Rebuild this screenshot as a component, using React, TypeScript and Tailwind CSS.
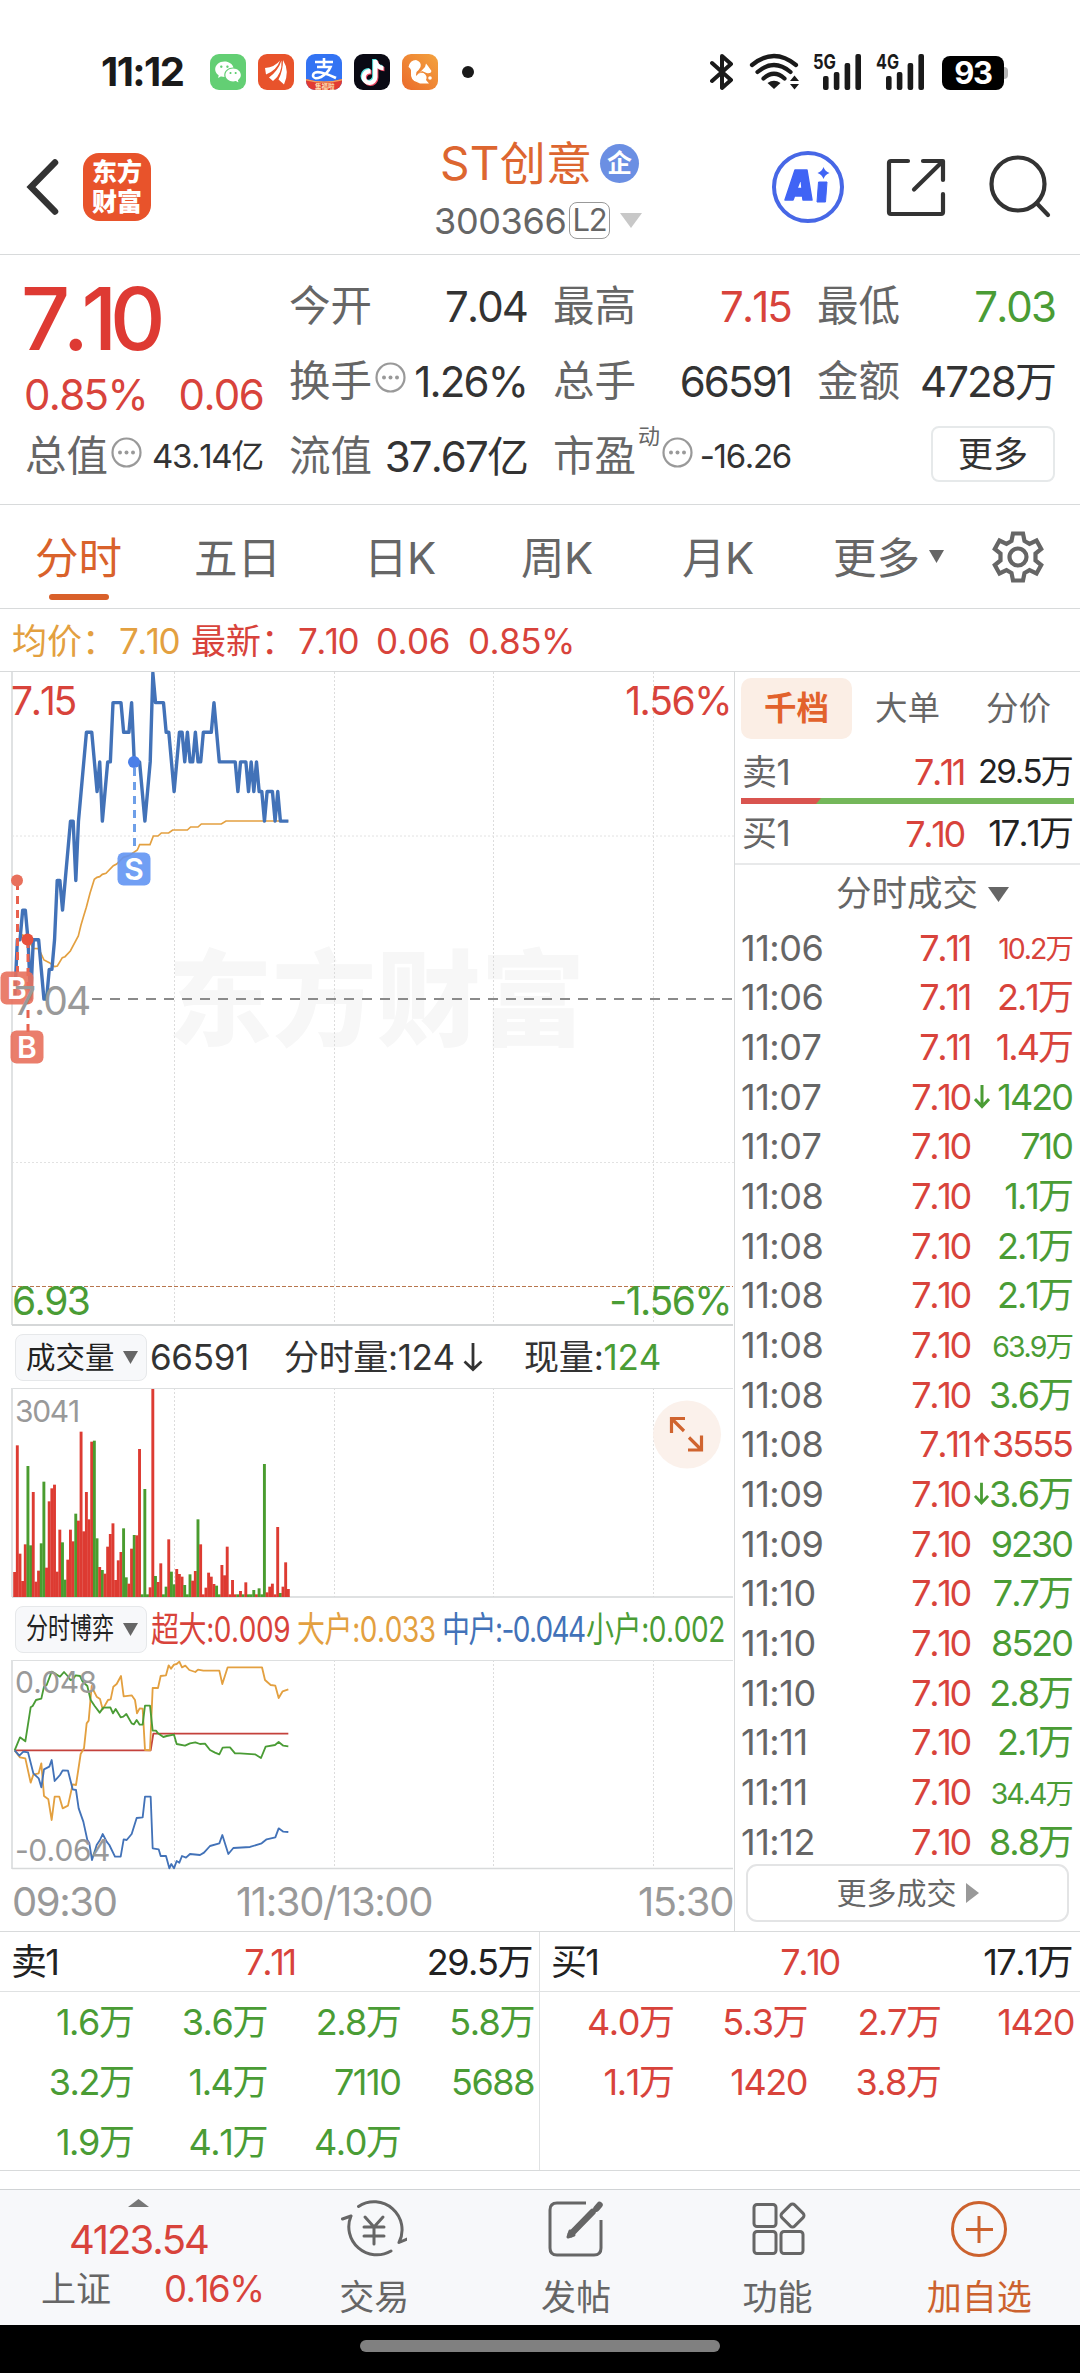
import type { ReactNode } from "react";
import clsx from "clsx";
import { FaTiktok } from "react-icons/fa6";
import { RiWechatFill } from "react-icons/ri";

const UP = "text-[#d8433b]";
const DOWN = "text-[#4a9c35]";

/* minute prices, in cents above 7.00 */
const PRICES = [
  4, 6, 6, 7, 7, 6, 4, 6, 6, 6, 5, 4, 4, 5, 5, 6, 8, 8, 7, 8, 9, 10, 10, 8, 10,
  11, 12, 13, 13, 13, 12, 11, 12, 10, 11, 12, 12, 14, 14, 14, 14, 13, 13, 13,
  14, 12, 12, 12, 11, 10, 11, 12, 15, 14, 14, 14, 14, 13, 13, 12, 11, 12, 13,
  13, 12, 13, 12, 12, 13, 12, 12, 13, 13, 13, 13, 14, 13, 12, 12, 12, 12, 12,
  12, 12, 11, 12, 12, 12, 11, 12, 11, 12, 11, 11, 10, 11, 11, 11, 10, 11, 10,
  10, 10, 10,
];

/* bar heights, negative for a falling minute */
const VOLUMES = [
  75, 455, 130, 48, 158, -393, -155, 315, 46, 79, -161, -346, 88, 287, 326, 337,
  76, 202, -164, -52, 112, 202, 167, -250, 229, 496, 197, 315, 233, 466, -469,
  -176, 90, -81, 70, 151, 189, 221, 51, 110, 135, -206, -59, 40, 145, -186, 185,
  444, -8, -324, -8, 29, 624, -63, 45, 101, -8, -31, 173, -76, -38, 84, 69, 61,
  -36, -8, -68, 49, 78, -233, 158, 8, 28, 73, 61, 39, -34, -8, 96, 65, 151, 8,
  51, 8, -8, 18, -8, 44, -8, -8, -21, 8, -26, -8, -399, 14, 31, 40, 8, 210, -12,
  31, 104, 24,
];

const minuteX = (i: number) => 14.7 + i * 2.657;

const AVERAGE =
  "44,1010 52,839 60,838 68,825 76,830 84,842 92,852 100,865 116,866 132,900 148,908 164,920 172,918 187,893 195,890 211,873 235,828 243,795 251,768 259,742 270,700 283,658 291,652 299,650 307,643 318,640 340,617 350,612 370,592 387,587 412,570 419,554 450,554 460,528 474,528 484,519 506,519 518,510 562,510 572,501 594,501 604,492 664,492 678,483 865,483";

const FLOWS = [
  {
    color: "#c4423c",
    points: "44,451 452,451 460,401 865,401",
  },
  {
    color: "#e3a040",
    points:
      "44,451 60,472 76,475 92,548 100,524 116,520 124,490 132,588 145,598 155,660 164,590 178,590 188,625 204,617 218,553 228,555 242,462 252,445 260,370 266,362 275,258 280,270 290,290 300,297 308,328 324,300 332,298 340,260 350,252 363,228 371,289 395,286 405,300 411,340 419,325 428,326 435,450 450,451 458,264 474,264 482,228 498,226 506,196 513,206 522,194 530,192 538,185 546,202 556,197 568,210 586,216 594,209 610,212 658,212 667,252 683,202 786,202 795,240 812,255 826,257 836,294 848,274 865,268",
  },
  {
    color: "#4a9c35",
    points:
      "44,451 60,412 76,424 92,322 98,318 108,300 124,296 132,260 140,255 155,215 164,220 172,225 180,230 192,216 203,228 211,240 219,238 227,226 240,228 248,245 262,258 272,300 284,318 299,338 310,323 331,322 339,340 347,327 362,352 370,350 379,342 395,370 402,373 410,360 419,374 428,374 435,317 450,317 458,392 468,392 474,400 490,411 500,408 522,404 530,432 555,437 570,430 586,427 600,432 615,431 630,450 645,458 658,463 668,443 680,442 690,442 705,460 720,460 765,463 783,474 797,440 825,435 836,426 850,437 865,439",
  },
  {
    color: "#4272b8",
    points:
      "44,451 58,467 70,455 84,457 100,520 116,535 124,562 132,508 148,500 155,480 164,543 180,525 188,511 204,512 218,568 228,570 236,625 250,665 262,720 268,730 276,780 290,735 300,720 308,702 320,725 328,735 345,770 362,770 371,718 380,720 395,702 410,654 428,652 435,590 452,590 458,745 476,748 482,768 498,768 508,805 514,792 522,805 530,783 538,788 546,768 558,773 570,762 600,765 612,758 630,738 658,730 667,705 685,762 700,744 750,741 785,730 800,718 826,712 836,685 850,695 865,696",
  },
];

/* time, price, volume, direction of the volume, arrow */
const TRADES: [string, string, string, "up" | "down", ("up" | "down")?][] = [
  ["11:06", "7.11", "10.2万", "up"],
  ["11:06", "7.11", "2.1万", "up"],
  ["11:07", "7.11", "1.4万", "up"],
  ["11:07", "7.10", "1420", "down", "down"],
  ["11:07", "7.10", "710", "down"],
  ["11:08", "7.10", "1.1万", "down"],
  ["11:08", "7.10", "2.1万", "down"],
  ["11:08", "7.10", "2.1万", "down"],
  ["11:08", "7.10", "63.9万", "down"],
  ["11:08", "7.10", "3.6万", "down"],
  ["11:08", "7.11", "3555", "up", "up"],
  ["11:09", "7.10", "3.6万", "down", "down"],
  ["11:09", "7.10", "9230", "down"],
  ["11:10", "7.10", "7.7万", "down"],
  ["11:10", "7.10", "8520", "down"],
  ["11:10", "7.10", "2.8万", "down"],
  ["11:11", "7.10", "2.1万", "down"],
  ["11:11", "7.10", "34.4万", "down"],
  ["11:12", "7.10", "8.8万", "down"],
];

const SELL_QUEUE = [
  "1.6万", "3.6万", "2.8万", "5.8万",
  "3.2万", "1.4万", "7110", "5688",
  "1.9万", "4.1万", "4.0万",
];
const BUY_QUEUE = ["4.0万", "5.3万", "2.7万", "1420", "1.1万", "1420", "3.8万"];

function AppBadge({ className, children }: { className: string; children: ReactNode }) {
  return (
    <div
      className={clsx(
        "relative flex size-9 items-center justify-center overflow-hidden rounded-[9px] text-white",
        className,
      )}
    >
      {children}
    </div>
  );
}

function Signal({ label }: { label: string }) {
  return (
    <svg className="overflow-visible" width="50" height="38" viewBox="0 0 50 38" fill="#1a1a1a">
      <text
        x="0"
        y="16"
        fontSize="20"
        fontWeight="700"
        textLength="23"
        lengthAdjust="spacingAndGlyphs"
      >
        {label}
      </text>
      <rect x="10" y="23" width="5.6" height="14" rx="2" />
      <rect x="20.8" y="19" width="5.6" height="18" rx="2" />
      <rect x="31.6" y="10" width="5.6" height="27" rx="2" />
      <rect x="42.4" y="1" width="5.6" height="36" rx="2" />
    </svg>
  );
}

function StatusBar() {
  return (
    <div className="h-[120px] pt-[53px]">
      <div className="flex h-[38px] items-center pl-[101px]">
        <span className="w-[109px] text-[40px] font-bold tracking-[-0.04em] text-[#1a1a1a]">
          11:12
        </span>
        <div className="flex gap-3">
          <AppBadge className="bg-[#63cf74]">
            <RiWechatFill size={28} />
          </AppBadge>
          <AppBadge className="bg-[#e8532b]">
            <svg width="36" height="36" viewBox="0 0 36 36" fill="#fff">
              <path d="M7 14Q17 13 22 6.500Q19 16 8 20.500Z" />
              <path d="M11 23.500Q20 17 23.500 6.500Q24.500 20 15 27Z" />
              <path d="M20.500 25.500Q25 17 25 6Q32 17 26 30.500Z" />
            </svg>
          </AppBadge>
          <AppBadge className="bg-[#3373f3]">
            <svg width="36" height="36" viewBox="0 0 36 36">
              <path
                d="M18 4V13M9 8H27M11 13H24.500Q22 19 15 23Q8 26 7 22Q7 17 15 18.500Q22 20 30 24"
                fill="none"
                stroke="#fff"
                strokeWidth="2.600"
              />
              <path d="M0 25Q18 30 36 25V36H0Z" fill="#e23b32" />
              <path d="M0 25Q18 30 36 25V26.500Q18 31 0 26.500Z" fill="#f0a060" />
              <text x="9" y="34.500" fontSize="6.500" fontWeight="700" fill="#fbe0b0">
                集福啦
              </text>
            </svg>
          </AppBadge>
          <AppBadge className="bg-[#0a0a14]">
            <FaTiktok size={25} className="absolute left-[5px] top-[5px] text-[#5ee6e4]" />
            <FaTiktok size={25} className="absolute left-[7px] top-[7px] text-[#ee4c66]" />
            <FaTiktok size={25} className="absolute left-[6px] top-[6px]" />
          </AppBadge>
          <AppBadge className="bg-gradient-to-bl from-[#f3a23e] to-[#ea6a2c]">
            <svg width="36" height="36" viewBox="0 0 36 36" fill="#fff">
              <path d="M6.500 13Q8 6 14 6Q20 8 18.500 13Q17 16 14.500 18Q13 24 16 28.500Q8 27 9 18Q9.500 15 6.500 13Z" />
              <path d="M15.500 21L23 13L24 9.500L26 12L29.500 17Q29 20 24.500 19L20 17Z" />
              <path d="M14 22Q17 18 21.500 19Q26 22 24 26L27 29.500H18Q13 28 14 22Z" />
              <circle cx="28" cy="24" r="1.800" />
            </svg>
          </AppBadge>
        </div>
        <div className="ml-6 size-3 rounded-full bg-[#1a1a1a]" />
        <svg
          className="ml-[236px]"
          width="24"
          height="38"
          viewBox="0 0 24 38"
          fill="none"
          stroke="#1a1a1a"
          strokeWidth="4"
          strokeLinecap="round"
          strokeLinejoin="round"
        >
          <path d="M2 10L21 27L12 35V3L21 11L2 28" />
        </svg>
        <svg
          className="ml-[15px]"
          width="52"
          height="38"
          viewBox="0 0 52 38"
          fill="none"
          stroke="#1a1a1a"
          strokeWidth="4.200"
          strokeLinecap="round"
        >
          <path d="M3 12Q25 -6 47 12" />
          <path d="M8.500 19Q25 5 41.500 19" />
          <path d="M14.500 25.500Q25 16 35.500 25.500" />
          <path d="M18.500 30Q25 25.500 31.500 30L25 36Z" fill="#1a1a1a" stroke="none" />
          <path d="M41 28L45.500 22.500L50 28ZM41 31L45.500 36.500L50 31Z" fill="#1a1a1a" stroke="none" />
        </svg>
        <div className="ml-3 flex gap-[13px]">
          <Signal label="5G" />
          <Signal label="4G" />
        </div>
        <div className="ml-[16px] mt-0.5 flex h-[34px] w-[62px] items-center justify-center rounded-lg bg-black text-[31px] font-bold tracking-[-0.04em] text-white">
          93
        </div>
        <div className="mt-0.5 h-3 w-1 rounded-r bg-[#b5b5b5]" />
      </div>
    </div>
  );
}

function Header() {
  return (
    <header className="flex h-[135px] items-center border-b border-[#d8dadb] pl-[26px]">
      <svg width="36" height="60" viewBox="0 0 36 60" fill="none" stroke="#333" strokeWidth="6.500">
        <path d="M29 5.500L5 30L29 54.500" strokeLinecap="round" strokeLinejoin="miter" />
      </svg>
      <div className="ml-[21px] flex size-[68px] flex-col items-center justify-center rounded-2xl bg-[#e8532b] text-[25px] leading-[30px] font-black text-white">
        <span>东方</span>
        <span>财富</span>
      </div>
      <div className="ml-[283px] w-[240px] pt-[5px]">
        <div className="flex h-[62px] items-center pl-[6px] text-[46px] whitespace-nowrap text-[#dd6630]">
          <span className="w-[152px] tracking-[0.005em]">ST创意</span>
          <span className="ml-[8px] flex size-[39px] shrink-0 items-center justify-center rounded-full bg-[#6b8fe3] text-[25px] font-bold text-white">
            企
          </span>
        </div>
        <div className="flex h-[52px] items-center text-[36px] text-[#666]">
          <span className="w-[135px] tracking-[-0.01em]">300366</span>
          <span className="flex h-[37px] w-[41px] items-center justify-center rounded-lg border border-[#999] text-[31px] tracking-[-0.04em]">
            L2
          </span>
          <svg className="ml-[10px]" width="22" height="15" viewBox="0 0 22 15">
            <path d="M0 0H22L11 15Z" fill="#c8c8c8" />
          </svg>
        </div>
      </div>
      <svg className="ml-[97px]" width="74" height="74" viewBox="0 0 74 74">
        <circle cx="37" cy="37" r="34" fill="none" stroke="#4767e6" strokeWidth="4" />
        <path
          d="M14 50L24 20H36L41 50H32L31.500 46H23.500L22 50ZM26 38.500H31L30 28Z"
          fill="#4064f5"
          stroke="#4064f5"
          strokeWidth="1.500"
          strokeLinejoin="round"
        />
        <path d="M47.500 32H56L54.500 52H46Z" fill="#4064f5" stroke="#4064f5" strokeLinejoin="round" />
        <path d="M52.500 17Q54 21.500 58.500 23Q54 24.500 52.500 29Q51 24.500 46.500 23Q51 21.500 52.500 17Z" fill="#4064f5" />
      </svg>
      <svg
        className="ml-10"
        width="62"
        height="62"
        viewBox="0 0 62 62"
        fill="none"
        stroke="#333"
        strokeWidth="4.200"
        strokeLinecap="round"
        strokeLinejoin="round"
      >
        <path d="M23 5H6Q4 5 4 7V56Q4 58 6 58H56Q58 58 58 56V38" />
        <path d="M38 5H58V24M57 6L29 33.500" />
      </svg>
      <svg
        className="ml-[41px]"
        width="66"
        height="66"
        viewBox="0 0 66 66"
        fill="none"
        stroke="#333"
        strokeWidth="4.200"
        strokeLinecap="round"
      >
        <circle cx="30" cy="30" r="26.500" />
        <path d="M48.500 49L60 61" />
      </svg>
    </header>
  );
}

function InfoDot() {
  return (
    <svg className="ml-[3px] -mt-2" width="31" height="31" viewBox="0 0 31 31">
      <circle cx="15.500" cy="15.500" r="14" fill="none" stroke="#999" strokeWidth="2.200" />
      <circle cx="9" cy="15.500" r="2" fill="#999" />
      <circle cx="15.500" cy="15.500" r="2" fill="#999" />
      <circle cx="22" cy="15.500" r="2" fill="#999" />
    </svg>
  );
}

interface QuoteProps {
  label: string;
  value: string;
  info?: boolean;
  sup?: string;
  tone?: string;
  small?: boolean;
}

function Quote({ label, value, info, sup, tone = "text-[#333]", small }: QuoteProps) {
  return (
    <div className="flex h-[75px] items-center whitespace-nowrap text-[#666]">
      <span className="text-[41.500px]">{label}</span>
      {sup && <span className="-mt-10 -mr-[1px] ml-[2px] text-[22px]">{sup}</span>}
      {info && <InfoDot />}
      <span
        className={clsx(
          "ml-auto",
          tone,
          small ? "text-[33px] tracking-[-0.04em]" : "text-[42px] tracking-[-0.045em]",
        )}
      >
        {value}
      </span>
    </div>
  );
}

function Quotes() {
  return (
    <section className="grid h-[250px] grid-cols-4 gap-x-[26px] border-b border-[#d8dadb] px-[25px] pt-[14px]">
      <div>
        <div className="-ml-1 h-[100px] text-[86px] leading-[100px] font-medium tracking-[-0.085em] text-[#de3a33]">
          7.10
        </div>
        <div
          className={clsx(
            "-ml-px flex h-[50px] items-center justify-between text-[42px] tracking-[-0.04em]",
            UP,
          )}
        >
          <span>0.85%</span>
          <span>0.06</span>
        </div>
        <Quote label="总值" value="43.14亿" info small />
      </div>
      <div>
        <Quote label="今开" value="7.04" />
        <Quote label="换手" value="1.26%" info />
        <Quote label="流值" value="37.67亿" />
      </div>
      <div>
        <Quote label="最高" value="7.15" tone={UP} />
        <Quote label="总手" value="66591" />
        <Quote label="市盈" value="-16.26" sup="动" info small />
      </div>
      <div>
        <Quote label="最低" value="7.03" tone={DOWN} />
        <Quote label="金额" value="4728万" />
        <div className="flex h-[70px] items-center justify-end">
          <button className="h-[56px] w-[124px] rounded-lg border-2 border-[#e6e9ea] text-[35px] leading-none text-[#333]">
            更多
          </button>
        </div>
      </div>
    </section>
  );
}

function Tabs() {
  return (
    <nav className="flex h-[104px] items-center border-b border-[#d8dadb] pl-[35px] text-[43.500px] whitespace-nowrap text-[#666]">
      <div className="relative w-[159px] pt-1 text-[#d9622b]">
        分时
        <div className="absolute -bottom-[9px] left-[14px] h-1.5 w-[60px] rounded-full bg-[#d9602a]" />
      </div>
      <div className="w-[170px] pt-1">五日</div>
      <div className="w-[157px] pt-1 tracking-[-0.01em]">日K</div>
      <div className="w-[161px] pt-1 tracking-[-0.01em]">周K</div>
      <div className="w-[151px] pt-1 tracking-[-0.01em]">月K</div>
      <div className="flex w-[157px] items-center pt-1">
        更多
        <svg className="-mt-1 ml-[9px]" width="15" height="13" viewBox="0 0 15 13">
          <path d="M0 0H15L7.500 13Z" fill="#666" />
        </svg>
      </div>
      <svg width="56" height="56" viewBox="-28 -28 56 56" fill="none" stroke="#666" strokeWidth="4.200">
        <path d="M-5 -23.500H5L6.500 -16L11.500 -13.200L18.500 -16.500L23.200 -8L17.500 -3.500V3.500L23.200 8L18.500 16.500L11.500 13.200L6.500 16L5 23.500H-5L-6.500 16L-11.500 13.200L-18.500 16.500L-23.200 8L-17.500 3.500V-3.500L-23.200 -8L-18.500 -16.500L-11.500 -13.200L-6.500 -16Z" />
        <circle r="8.500" />
      </svg>
    </nav>
  );
}

function Summary() {
  return (
    <div
      className={clsx(
        "flex h-[63px] items-center border-b border-[#d8dadb] pl-3 pt-0.5 text-[35px] whitespace-nowrap",
        UP,
      )}
    >
      <span className="w-[107px] text-[#e3a040]">均价：</span>
      <span className="w-[72px] tracking-[-0.045em] text-[#e3a040]">7.10</span>
      <span className="w-[107px]">最新：</span>
      <span className="w-[78px] tracking-[-0.045em]">7.10</span>
      <span className="w-[92px] tracking-[-0.015em]">0.06</span>
      <span className="tracking-[-0.015em]">0.85%</span>
    </div>
  );
}

function GridLines({ height }: { height: number }) {
  return (
    <g stroke="#dcdcdc" strokeDasharray="2 2">
      <path d={`M174.500 0V${height}M334.500 0V${height}M493.500 0V${height}M653.500 0V${height}`} />
    </g>
  );
}

function TradeMark({ x, y, letter, color }: { x: number; y: number; letter: string; color: string }) {
  return (
    <g>
      <rect x={x - 16.5} y={y - 16.5} width="33" height="33" rx="6" fill={color} fillOpacity="0.9" />
      <text x={x} y={y + 11} fontSize="30" fontWeight="600" textAnchor="middle" fill="#fff">
        {letter}
      </text>
    </g>
  );
}

function PriceChart() {
  const line = PRICES.map((p, i) => `${minuteX(i)},${327 - (p - 4) * 29.64}`).join(" ");

  return (
    <svg className="block" width="734" height="654" viewBox="0 0 734 654">
      <text
        x="168"
        y="366"
        fontSize="104"
        fontWeight="900"
        fill="#f7f7f7"
        textLength="417"
      >
        东方财富
      </text>
      <GridLines height={653} />
      <path d="M12 164H734M12 490.500H734" stroke="#e2e2e2" strokeDasharray="2 2" />
      <path d="M12 0V653" stroke="#e0e2e3" strokeWidth="2" />
      <path d="M12 653H733" stroke="#d5d7d8" strokeWidth="2" />
      <path d="M12 614.500H733" stroke="#b8764e" strokeWidth="1.200" strokeDasharray="4 2" />
      <g transform="translate(0 -12) scale(.33333)">
        <polyline points={AVERAGE} fill="none" stroke="#e3a040" strokeWidth="5" />
      </g>
      <polyline points={line} fill="none" stroke="#4272b8" strokeWidth="3.400" strokeLinejoin="round" />

      <path d="M134.500 96V180" stroke="#6e9fe8" strokeWidth="3" strokeDasharray="8 6" />
      <circle cx="134" cy="90" r="6" fill="#4a7fe8" />
      <TradeMark x={134} y={197} letter="S" color="#6295f3" />

      <path d="M17.500 210V300M28 268V360" stroke="#e8614e" strokeWidth="3" strokeDasharray="8 6" />
      <circle cx="17" cy="208.500" r="6" fill="#e8705c" />
      <circle cx="27.500" cy="267.500" r="6" fill="#e8503c" />
      <TradeMark x={17} y={316} letter="B" color="#e8705c" />
      <TradeMark x={27} y={375} letter="B" color="#e8705c" />

      <path d="M92 327H733" stroke="#8a8a8a" strokeWidth="2" strokeDasharray="10 8" />
      <g fontSize="39" letterSpacing="-1.600">
        <text x="11" y="43" fill="#d8433b" letterSpacing="-2.200">
          7.15
        </text>
        <text x="731" y="43" textAnchor="end" fill="#d8433b" letterSpacing="-1.500">
          1.56%
        </text>
        <text x="14" y="343" fill="#999" letterSpacing="-2">
          7.04
        </text>
        <text x="12" y="643" fill="#4a9c35">6.93</text>
        <text x="731" y="643" textAnchor="end" fill="#4a9c35">
          -1.56%
        </text>
      </g>
    </svg>
  );
}

function VolumeChart() {
  return (
    <svg className="block" width="734" height="210" viewBox="0 0 734 210">
      <GridLines height={209} />
      <path d="M12 .5H733" stroke="#dddfe0" />
      <path d="M12 0V209" stroke="#e0e2e3" strokeWidth="2" />
      <path d="M12 209H733" stroke="#d5d7d8" strokeWidth="1.500" />
      {VOLUMES.map((v, i) => (
        <rect
          key={i}
          x={minuteX(i) - 1.5}
          y={209 - Math.abs(v) / 3}
          width="2.900"
          height={Math.abs(v) / 3}
          fill={v < 0 ? "#4a9c2f" : "#dd3b32"}
        />
      ))}
      <text x="15" y="34" fontSize="30" letterSpacing="-1.300" fill="#999">
        3041
      </text>
      <circle cx="687" cy="46.500" r="34" fill="#fbf1eb" />
      <g fill="none" stroke="#d0642f" strokeWidth="3.200">
        <path d="M685 30.500H671.500V45M672 31L684 43" />
        <path d="M688 62H701.500V47.500M701 61.500L689 49.500" />
      </g>
    </svg>
  );
}

function FlowChart() {
  return (
    <svg className="block" width="734" height="210" viewBox="0 0 734 210">
      <GridLines height={209} />
      <path d="M12 .5H733" stroke="#dddfe0" />
      <path d="M12 0V209" stroke="#e0e2e3" strokeWidth="2" />
      <path d="M12 208.500H733" stroke="#d8dadb" strokeWidth="1.500" />
      <g transform="translate(0 -60) scale(.33333)" fill="none" strokeWidth="5.500" strokeLinejoin="round">
        {FLOWS.map((flow) => (
          <polyline key={flow.color} points={flow.points} stroke={flow.color} />
        ))}
      </g>
      <g fontSize="30" fill="#999" letterSpacing="-.6">
        <text x="15" y="33">0.048</text>
        <text x="15" y="201">-0.064</text>
      </g>
    </svg>
  );
}

function Dropdown({ children }: { children: ReactNode }) {
  return (
    <div className="flex h-[47px] w-[132px] shrink-0 items-center justify-between rounded-lg border border-[#e6e8ea] bg-[#f7f8fa] pr-2 pl-[10px] text-[#222]">
      {children}
      <svg width="15" height="13" viewBox="0 0 15 13">
        <path d="M0 0H15L7.500 13Z" fill="#666" />
      </svg>
    </div>
  );
}

function FlowLabel({ className, children }: { className: string; children: ReactNode }) {
  return (
    <div className={clsx("shrink-0", className)}>
      <span className="inline-block origin-left scale-x-[0.8] tracking-[-0.015em]">{children}</span>
    </div>
  );
}

function ChartColumn() {
  return (
    <div className="w-[735px] shrink-0 border-r border-[#d8dadb]">
      <PriceChart />
      <div className="flex h-[62px] items-center pl-[15px] text-[35px] whitespace-nowrap text-[#333]">
        <Dropdown>
          <span className="text-[29.500px]">成交量</span>
        </Dropdown>
        <span className="ml-[3px] w-[134px] tracking-[-0.01em]">66591</span>
        <span className="w-[172px] tracking-[-0.01em]">分时量:124</span>
        <svg className="ml-[7px]" width="20" height="30" viewBox="0 0 20 30" fill="none" stroke="#333" strokeWidth="2.800">
          <path d="M10 1V27M1.500 19.500L10 27.500L18.500 19.500" />
        </svg>
        <span className="ml-[41px] tracking-[-0.005em]">
          现量:<span className={DOWN}>124</span>
        </span>
      </div>
      <VolumeChart />
      <div className="flex h-[62px] items-center pl-[15px] text-[35px] whitespace-nowrap">
        <Dropdown>
          <span className="w-[88px] text-[29px]">
            <span className="inline-block origin-left scale-x-[0.76]">分时博弈</span>
          </span>
        </Dropdown>
        <div className="ml-1 flex">
          <FlowLabel className="w-[146px] text-[#d8433b]">超大:0.009</FlowLabel>
          <FlowLabel className="w-[145px] text-[#e3a040]">大户:0.033</FlowLabel>
          <FlowLabel className="w-[144px] text-[#4272b8]">
            <span className="tracking-[-0.055em]">中户:-0.044</span>
          </FlowLabel>
          <FlowLabel className="w-[142px] text-[#4a9c35]">小户:0.002</FlowLabel>
        </div>
      </div>
      <FlowChart />
      <div className="flex h-[61px] items-center pt-0.5 text-[40px] tracking-[-0.035em] text-[#999]">
        <span className="w-[224px] pl-3">09:30</span>
        <span className="pl-[12px]">11:30/13:00</span>
        <span className="ml-auto pr-px">15:30</span>
      </div>
    </div>
  );
}

function Arrow({ dir }: { dir: "up" | "down" }) {
  return (
    <svg
      className={clsx("w-4", dir === "up" && "rotate-180")}
      width="16"
      height="24"
      viewBox="0 0 16 24"
      fill="none"
      stroke="currentColor"
      strokeWidth="3"
    >
      <path d="M8 0V22M1 14L8 21.500L15 14" />
    </svg>
  );
}

function TradeColumn() {
  return (
    <div className="flex w-[345px] flex-col tracking-[-0.03em] text-[#666]">
      <div className="flex pt-1.5 pl-1.5 text-[32.500px] leading-[61px] tracking-normal">
        <div className="w-[111px] rounded-[10px] bg-[#fbeee5] text-center font-bold text-[#e2622c]">
          千档
        </div>
        <div className="w-[111px] text-center">大单</div>
        <div className="w-[111px] text-center">分价</div>
      </div>
      <div className="mt-[7px] flex h-[52px] items-center pr-2 pl-[7px] text-[35px]">
        卖1
        <span className={clsx("ml-auto text-[36px] tracking-[-0.07em]", UP)}>7.11</span>
        <span className="w-[108px] text-right text-[33px] tracking-[-0.055em] text-[#222]">29.5万</span>
      </div>
      <svg className="ml-1.5 block" width="333" height="6" viewBox="0 0 333 6">
        <path d="M0 0H333V6H0Z" fill="#74b75a" />
        <path d="M0 0H80L75 6H0Z" fill="#d9544f" />
      </svg>
      <div className="flex h-[61px] items-center border-b-2 border-[#e8e9ea] pr-2 pl-[7px] text-[35px]">
        买1
        <span className={clsx("ml-auto text-[36px] tracking-[-0.065em]", UP)}>7.10</span>
        <span className="w-[108px] text-right text-[35px] tracking-[-0.055em] text-[#222]">17.1万</span>
      </div>
      <div className="flex h-[58px] items-center pl-[101px] text-[35.500px] tracking-normal">
        分时成交
        <svg className="ml-[10px]" width="21" height="15" viewBox="0 0 21 15">
          <path d="M0 0H21L10.500 15Z" fill="#666" />
        </svg>
      </div>
      <div className="h-[944px]">
        {TRADES.map(([time, price, volume, dir, arrow], i) => (
          <div key={i} className="flex h-[49.670px] items-center pr-2 pl-1.5 text-[36px] whitespace-nowrap">
            <span>{time}</span>
            <span className={clsx("ml-auto tracking-[-0.065em]", UP)}>{price}</span>
            <span
              className={clsx(
                "flex w-[102px] items-center pl-[4px] tracking-[-0.055em]",
                dir === "up" ? UP : DOWN,
              )}
            >
              {arrow && <Arrow dir={arrow} />}
              <span className={clsx("ml-auto", volume.length >= 5 ? "pt-1 text-[28.500px]" : "text-[36px]")}>
                {volume}
              </span>
            </span>
          </div>
        ))}
      </div>
      <button className="-mt-[3px] ml-[11px] flex h-[58px] w-[323px] items-center justify-center gap-[9px] rounded-[11px] border-2 border-[#e3e4e5] text-[30px] tracking-normal">
        更多成交
        <svg width="13" height="20" viewBox="0 0 13 20">
          <path d="M0 0L13 10L0 20Z" fill="#999" />
        </svg>
      </button>
    </div>
  );
}

interface QueueProps {
  label: string;
  price: string;
  total: string;
  tone: string;
  items: string[];
}

function Queue({ label, price, total, tone, items }: QueueProps) {
  return (
    <div className="w-[540px] text-[36px]">
      <div className="flex h-[60px] items-center border-b border-[#e0e2e3] pr-2 pl-[11px] text-[#222]">
        <span className="w-[170px] tracking-[-0.05em]">{label}</span>
        <span className={clsx("w-[177px] text-center tracking-[-0.065em]", UP)}>{price}</span>
        <span className="ml-auto tracking-[-0.04em]">{total}</span>
      </div>
      <div className={clsx("grid h-[178px] auto-rows-[60px] grid-cols-4 pr-1.5", tone)}>
        {items.map((item, i) => (
          <span key={i} className="text-right leading-[60px] tracking-[-0.04em]">
            {item}
          </span>
        ))}
      </div>
    </div>
  );
}

function NavItem({ label, className, children }: { label: string; className?: string; children: ReactNode }) {
  return (
    <div className={clsx("flex w-[202px] flex-col items-center pt-2", className)}>
      <svg
        width="66"
        height="62"
        viewBox="0 0 66 62"
        fill="none"
        stroke="currentColor"
        strokeWidth="3"
        strokeLinecap="round"
        strokeLinejoin="round"
      >
        {children}
      </svg>
      <span className="mt-2.5 text-[35px] leading-[54px]">{label}</span>
    </div>
  );
}

function BottomNav() {
  return (
    <nav className="flex h-[136px] border-t border-[#d0d3d5] bg-[#f7f8fa] text-[#666]">
      <div className="w-[274px] pt-[9px]">
        <svg className="ml-32 block" width="21" height="8" viewBox="0 0 21 8">
          <path d="M0 8L10.500 0L21 8Z" fill="#777" />
        </svg>
        <div className={clsx("pl-[69px] text-[40px] leading-[66px] tracking-[-0.05em]", UP)}>4123.54</div>
        <div className="-mt-0.5 flex items-center pl-[41px] text-[35px] leading-[36px]">
          上证
          <span className={clsx("ml-[53px] text-[36.500px] tracking-[-0.04em]", UP)}>0.16%</span>
        </div>
      </div>
      <NavItem label="交易">
        <path d="M17.500 8.500A28 28 0 0 1 58 44.500L66 41M10 18A28 28 0 0 0 50 53M10 18L1.500 21" />
        <path d="M24 19L33 29L42 19M23 29H43M23 38H43M33 29V46" />
      </NavItem>
      <NavItem label="发帖">
        <path d="M43 5H14Q7 5 7 12V50Q7 57 14 57H51Q58 57 58 50V22" strokeLinecap="butt" />
        <path d="M56.500 7L53.500 10.500M49.500 14L28 36" strokeWidth="6.500" />
        <path d="M25 39L27 33L31 37Z" fill="currentColor" />
      </NavItem>
      <NavItem label="功能">
        <rect x="9" y="6.500" width="22" height="22" rx="3" />
        <rect x="9" y="33.500" width="22" height="22" rx="3" />
        <rect x="36" y="33.500" width="22" height="22" rx="3" />
        <rect x="38.500" y="8.500" width="18" height="18" rx="3" transform="rotate(45 47.500 17.500)" />
      </NavItem>
      <NavItem label="加自选" className="text-[#cc622e]">
        <circle cx="33" cy="31" r="26.500" />
        <path d="M33 18V45M20 31.500H47" strokeLinecap="butt" />
      </NavItem>
    </nav>
  );
}

export default function App() {
  return (
    <div className="w-[1080px] overflow-hidden bg-white font-['Inter','Noto_Sans_CJK_SC',sans-serif] [font-kerning:none]">
      <StatusBar />
      <Header />
      <Quotes />
      <Tabs />
      <Summary />
      <main className="flex h-[1260px] border-b border-[#d8dadb]">
        <ChartColumn />
        <TradeColumn />
      </main>
      <section className="flex h-[239px] border-b border-[#d8dadb]">
        <Queue label="卖1" price="7.11" total="29.5万" tone={DOWN} items={SELL_QUEUE} />
        <div className="-ml-px w-px bg-[#e0e2e3]" />
        <Queue label="买1" price="7.10" total="17.1万" tone={UP} items={BUY_QUEUE} />
      </section>
      <div className="h-[18px]" />
      <BottomNav />
      <footer className="flex h-12 justify-center bg-black pt-[15px]">
        <div className="h-3 w-[360px] rounded-full bg-[#808080]" />
      </footer>
    </div>
  );
}
